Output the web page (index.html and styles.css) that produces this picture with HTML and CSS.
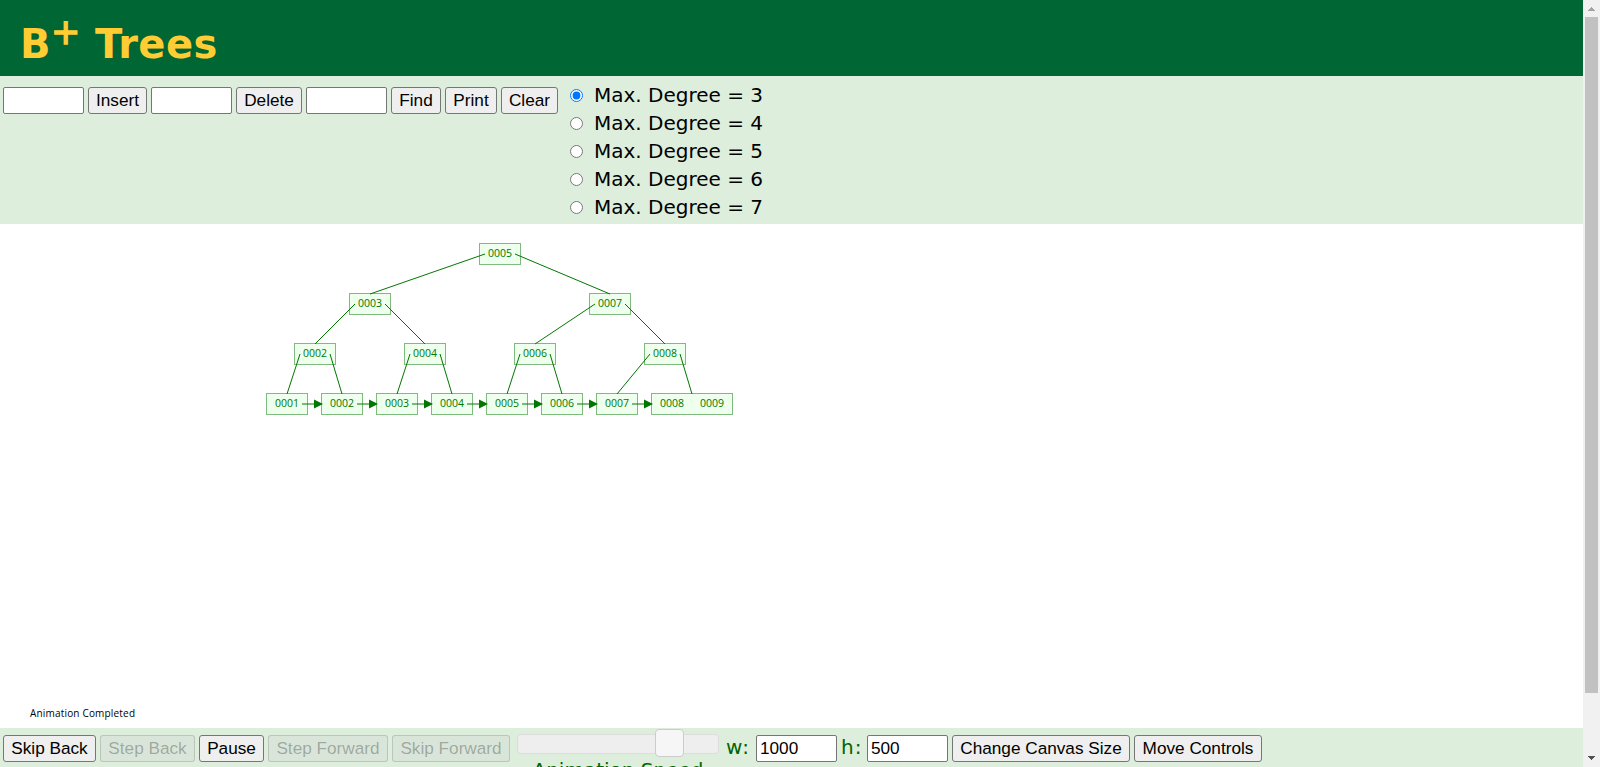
FILE: index.html
```
<!DOCTYPE html>
<html lang="en">
<head>
<meta charset="UTF-8" />
<title>B+ Tree Visualization</title>
<link rel="stylesheet" href="styles.css">
</head>
<body>
<div class="container">
  <header class="header">
    <h1>B<sup>+</sup> Trees</h1>
  </header>

  <section class="algorithm-controls">
    <input type="text">
    <button class="btn-insert">Insert</button>
    <input type="text">
    <button class="btn-delete">Delete</button>
    <input type="text">
    <button class="btn-find">Find</button>
    <button class="btn-print">Print</button>
    <button class="btn-clear">Clear</button>
    <div class="degrees">
      <label><input type="radio" name="degree" checked><span>Max. Degree = 3</span></label>
      <label><input type="radio" name="degree"><span>Max. Degree = 4</span></label>
      <label><input type="radio" name="degree"><span>Max. Degree = 5</span></label>
      <label><input type="radio" name="degree"><span>Max. Degree = 6</span></label>
      <label><input type="radio" name="degree"><span>Max. Degree = 7</span></label>
    </div>
  </section>

  <svg class="canvas" id="canvas" width="1583" height="504">
    <text class="status" x="30" y="493" textLength="105">Animation Completed</text>
  </svg>

  <section class="general-controls">
    <button class="btn-skip-back">Skip Back</button>
    <button class="btn-step-back" disabled>Step Back</button>
    <button class="btn-pause">Pause</button>
    <button class="btn-step-forward" disabled>Step Forward</button>
    <button class="btn-skip-forward" disabled>Skip Forward</button>
    <div class="speed">
      <div class="slider"><span class="handle"></span></div>
      <div class="speed-label">Animation Speed</div>
    </div>
    <span class="size-label label-w">w:</span>
    <input type="text" value="1000">
    <span class="size-label label-h">h:</span>
    <input type="text" value="500">
    <button class="btn-size">Change Canvas Size</button>
    <button class="btn-move">Move Controls</button>
  </section>
</div>

<div class="scrollbar">
  <svg class="arrow" width="17" height="17" shape-rendering="crispEdges"><path d="M8 7h1v1h1v1h1v1h1v1H5v-1h1V9h1V8h1z" fill="#a3a3a3"/></svg>
  <div class="thumb"></div>
  <svg class="arrow arrow-down" width="17" height="17" shape-rendering="crispEdges"><path d="M5 6h7v1h-1v1h-1v1H9v1H8V9H7V8H6V7H5z" fill="#505050"/></svg>
</div>

<script>
  const canvas = document.getElementById('canvas');

  // x, y = center of the node, children = indexes into this list
  const nodes = [
    { x: 500, y: 30, keys: ['0005'], children: [1, 2] },
    { x: 370, y: 80, keys: ['0003'], children: [3, 4] },
    { x: 610, y: 80, keys: ['0007'], children: [5, 6] },
    { x: 315, y: 130, keys: ['0002'], children: [7, 8] },
    { x: 425, y: 130, keys: ['0004'], children: [9, 10] },
    { x: 535, y: 130, keys: ['0006'], children: [11, 12] },
    { x: 665, y: 130, keys: ['0008'], children: [13, 14] },
    { x: 287, y: 180, keys: ['0001'] },
    { x: 342, y: 180, keys: ['0002'] },
    { x: 397, y: 180, keys: ['0003'] },
    { x: 452, y: 180, keys: ['0004'] },
    { x: 507, y: 180, keys: ['0005'] },
    { x: 562, y: 180, keys: ['0006'] },
    { x: 617, y: 180, keys: ['0007'] },
    { x: 692, y: 180, keys: ['0008', '0009'] }
  ];

  function add(tag, attrs, text) {
    const el = document.createElementNS('http://www.w3.org/2000/svg', tag);
    for (const name in attrs) {
      el.setAttribute(name, attrs[name]);
    }
    if (text) el.textContent = text;
    canvas.appendChild(el);
  }

  function nodeWidth(node) {
    return node.keys.length * 40 + 1;
  }

  function drawNode(node) {
    const w = nodeWidth(node);
    add('rect', { class: 'node', x: Math.floor(node.x - w / 2) + 0.5, y: node.y - 10.5, width: w, height: 21 });
    node.keys.forEach((key, i) => {
      const x = node.x + (i - (node.keys.length - 1) / 2) * 40;
      add('text', { class: 'key', x: x, y: node.y + 3 }, key);
    });
  }

  function drawEdges(node) {
    (node.children || []).forEach((index, i) => {
      const child = nodes[index];
      add('line', { class: 'edge', x1: node.x + (i ? 15 : -15), y1: node.y, x2: child.x, y2: child.y - 10 });
    });
  }

  // linked list between the leaves
  function drawNext(from, to) {
    const end = to.x - nodeWidth(to) / 2 + 1.5;
    add('line', { class: 'edge', x1: from.x + 15, y1: 180, x2: end - 8, y2: 180 });
    add('path', { class: 'head', d: `M${end} 180l-9 -4.5v9z` });
  }

  nodes.forEach(drawNode);
  nodes.forEach(drawEdges);
  for (let i = 7; i < nodes.length - 1; i++) {
    drawNext(nodes[i], nodes[i + 1]);
  }
</script>
</body>
</html>
```

FILE: styles.css
```
* {
  box-sizing: border-box;
}
body {
  margin: 0;
  height: 767px;
  overflow: hidden;
  display: flex;
  background: white;
  font-family: Verdana, "DejaVu Sans", sans-serif;
}
.container {
  width: 1583px;
  display: flex;
  flex-direction: column;
}
.header {
  height: 76px;
  flex-shrink: 0;
  padding-left: 20px;
  background: #006633;
}
.header h1 {
  margin: 0;
  padding-top: 20px;
  font-size: 40px;
  line-height: 48px;
  letter-spacing: 0.4px;
  color: #ffcc33;
  white-space: nowrap;
}
.header sup {
  font-size: 35px;
  font-weight: normal;
  line-height: 0;
  vertical-align: 14px;
  -webkit-text-stroke: 1.4px #ffcc33;
}

.algorithm-controls, .general-controls {
  display: flex;
  align-items: flex-start;
  gap: 4px;
  padding-left: 3px;
  background: #ddeedd;
}
.algorithm-controls {
  height: 148px;
  padding-top: 11px;
  flex-shrink: 0;
}
.general-controls {
  height: 39px;
  padding-top: 7px;
  overflow: hidden;
  color: #006600;
}
button, input[type="text"] {
  height: 27px;
  margin: 0;
  flex-shrink: 0;
  border: 1px solid #767676;
  border-radius: 2px;
  font: 17.2px "Liberation Sans", Arial, sans-serif;
  color: black;
}
button {
  padding: 0;
  border-radius: 3px;
  background: #efefef;
  text-align: center;
  white-space: nowrap;
}
button:disabled {
  color: rgba(16, 16, 16, 0.3);
  background: rgba(210, 210, 210, 0.3);
  border-color: rgba(118, 118, 118, 0.3);
}
input[type="text"] {
  width: 81px;
  padding: 1px 3px;
  background: white;
}
.btn-insert { width: 59px; }
.btn-delete { width: 66px; }
.btn-find { width: 50px; }
.btn-print { width: 52px; }
.btn-clear { width: 57px; }
.btn-skip-back { width: 93px; }
.btn-step-back { width: 95px; }
.btn-pause { width: 65px; }
.btn-step-forward { width: 120px; }
.btn-skip-forward { width: 118px; }
.btn-size { width: 178px; }
.btn-move { width: 128px; }

/* max degree choices */
.degrees {
  margin: -6px 0 0 8px;
}
.degrees label {
  display: flex;
  align-items: center;
  height: 28px;
  font-size: 20px;
  white-space: nowrap;
}
.degrees input {
  width: 13px;
  height: 13px;
  margin: 0 11px 0 0;
}

/* drawing area */
.canvas {
  display: block;
  flex-shrink: 0;
  font-family: "Open Sans", "Noto Sans", sans-serif;
  font-size: 10px;
}
.status {
  fill: black;
}
.node {
  fill: #eeffee;
  stroke: #7fbb7f;
}
.key {
  font-size: 10.5px;
  fill: #007700;
  text-anchor: middle;
}
.edge {
  stroke: #007700;
}
.head {
  fill: #007700;
}

/* animation speed slider */
.speed {
  width: 202px;
  margin: -1px 3px 0 3px;
  flex-shrink: 0;
}
.slider {
  position: relative;
  height: 20px;
  border: 1px solid #dddddd;
  border-radius: 4px;
  background: #eeeeee;
}
.handle {
  position: absolute;
  left: 137px;
  top: -6px;
  width: 29px;
  height: 28px;
  border: 1px solid #cccccc;
  border-radius: 4px;
  background: #f6f6f6;
}
.speed-label {
  margin-top: 4px;
  font-size: 20px;
  line-height: 24px;
  text-align: center;
  white-space: nowrap;
}
.size-label {
  font-size: 20px;
  line-height: 25px;
  letter-spacing: 1px;
}
.label-w { width: 26px; }
.label-h { width: 22px; }

/* page scrollbar */
.scrollbar {
  width: 17px;
  display: flex;
  flex-direction: column;
  align-items: center;
  background: #f1f1f1;
}
.thumb {
  width: 13px;
  height: 676px;
  background: #c1c1c1;
}
.arrow-down {
  margin-top: auto;
}
```
